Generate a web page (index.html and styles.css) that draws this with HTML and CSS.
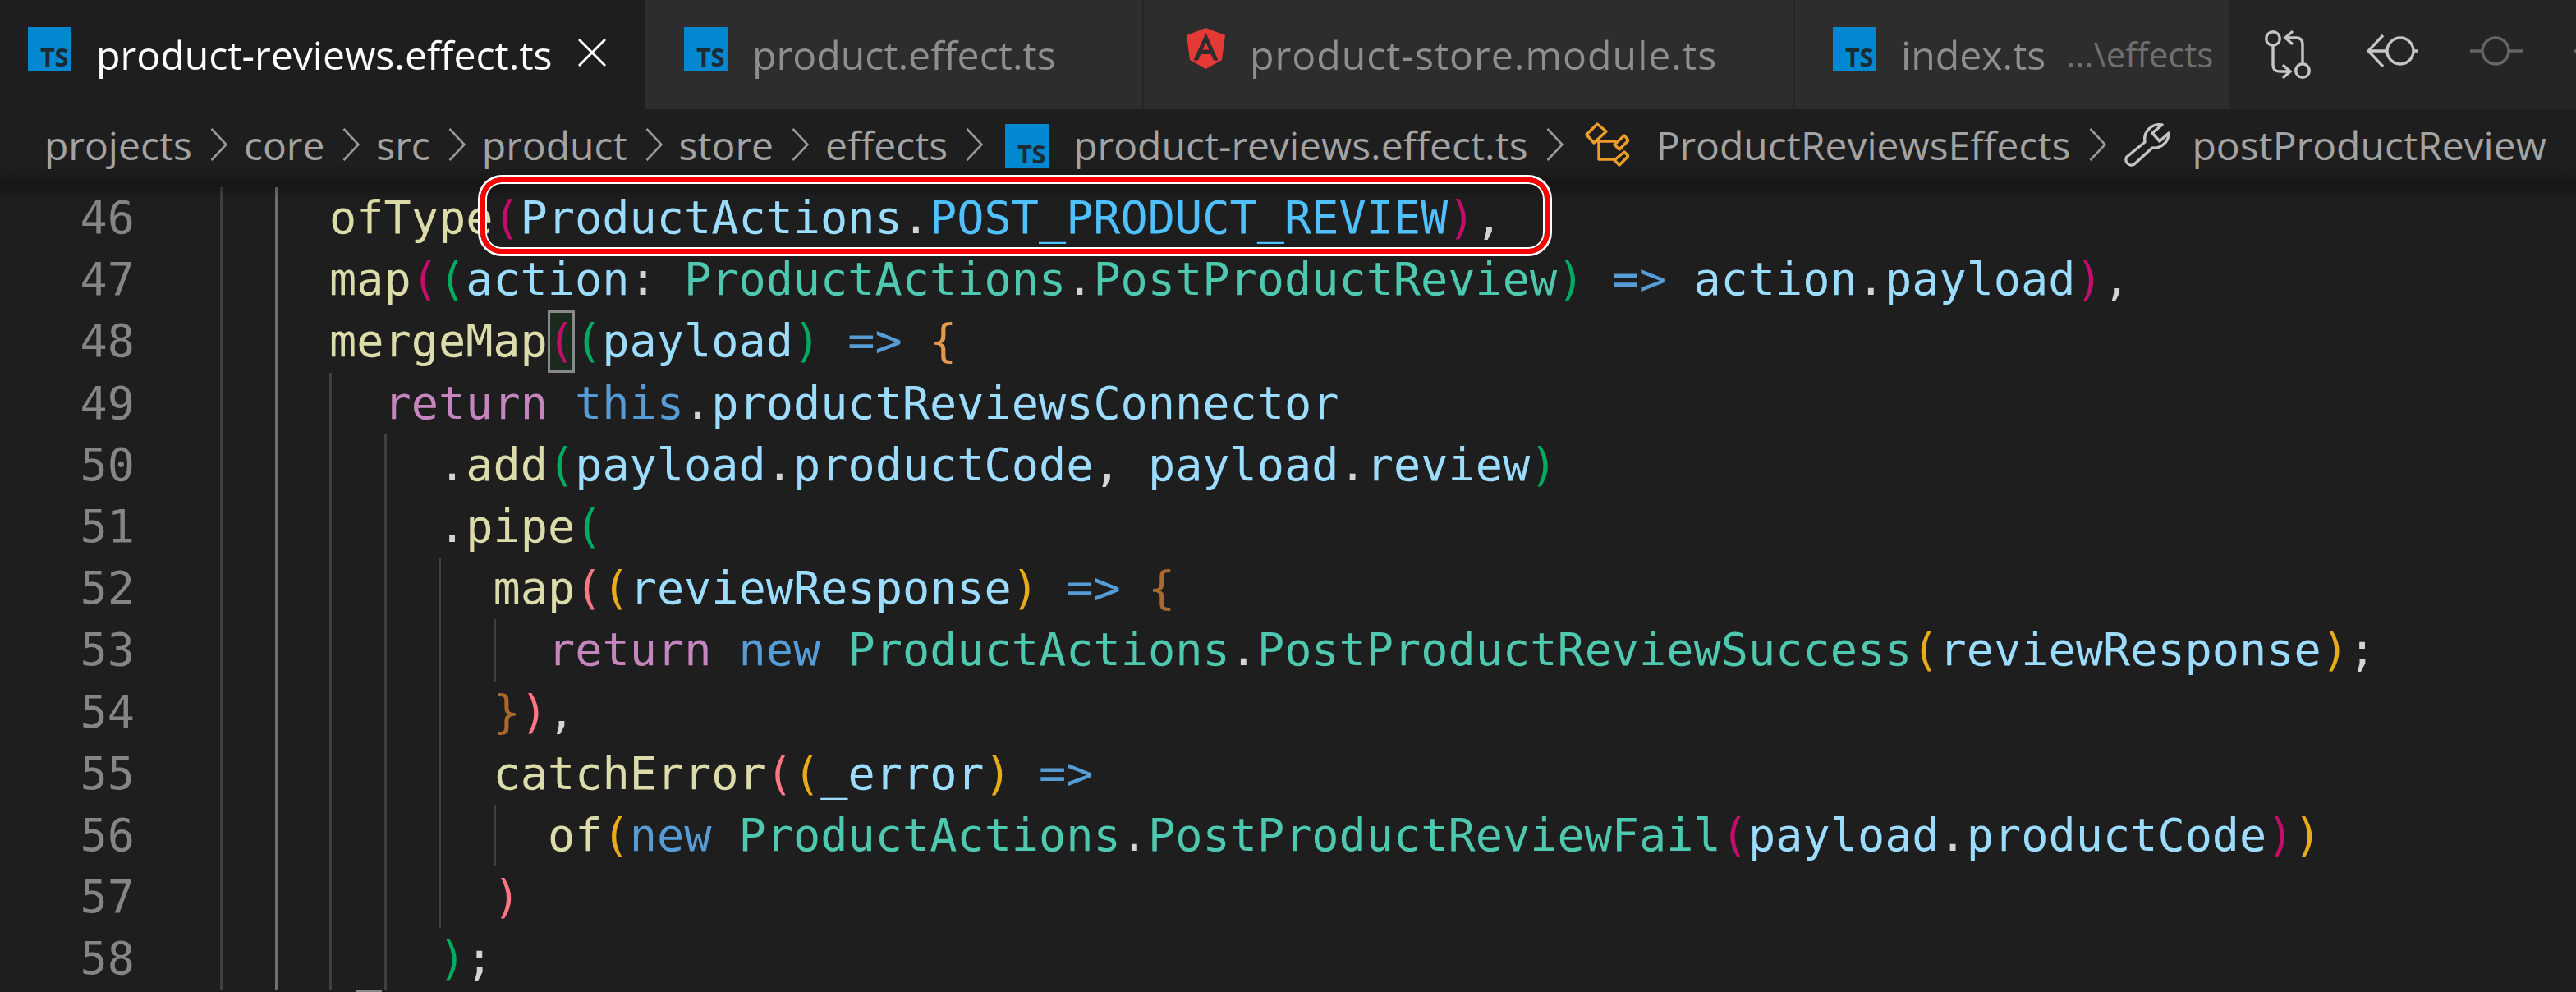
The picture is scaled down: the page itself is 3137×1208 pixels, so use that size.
FILE: index.html
```html
<!DOCTYPE html>
<html lang="en">
<head>
<meta charset="utf-8">
<title>product-reviews.effect.ts</title>
<link rel="stylesheet" href="styles.css">
</head>
<body>
<div class="window">
  <div class="tabbar">
    <div class="tab tab-active tab-1">
      <svg class="ts" viewBox="0 0 53 53"><rect width="53" height="53" fill="#0288d1"/><text x="49" y="48" text-anchor="end" class="ts-text">TS</text></svg>
      <span class="tab-name active-name">product-reviews.effect.ts</span>
      <svg class="close" viewBox="0 0 34 34"><path d="M1 1 33 33M33 1 1 33" stroke="#fff" stroke-width="3" fill="none"/></svg>
    </div>
    <div class="tab tab-2">
      <svg class="ts" viewBox="0 0 53 53"><rect width="53" height="53" fill="#0288d1"/><text x="49" y="48" text-anchor="end" class="ts-text">TS</text></svg>
      <span class="tab-name">product.effect.ts</span>
    </div>
    <div class="tab tab-3">
      <svg class="ng" viewBox="0 0 47 50"><path d="M23.500 0 47 9 43 39 23.500 50 4 39 0 9Z" fill="#e53935"/><path d="M23.500 6 8.500 39.500H14L17.500 32H29.500L33 39.500H38.500ZM19.700 26.500 23.500 17.500 27.300 26.500Z" fill="#2d2d2d" fill-rule="evenodd"/></svg>
      <span class="tab-name">product-store.module.ts</span>
    </div>
    <div class="tab tab-4">
      <svg class="ts" viewBox="0 0 53 53"><rect width="53" height="53" fill="#0288d1"/><text x="49" y="48" text-anchor="end" class="ts-text">TS</text></svg>
      <span class="tab-name">index.ts</span>
      <span class="tab-path">...\effects</span>
    </div>
    <div class="actions">
      <svg class="act act-pr" viewBox="0 0 56 59"><g fill="none" stroke="#c5c5c5" stroke-width="3.400" stroke-linecap="round"><circle cx="10" cy="10" r="8.300"/><circle cx="46" cy="49" r="8.300"/><path d="M10 19V42Q10 50 18 50H30M23 43 31 50 23 57"/><path d="M46 40V17Q46 9 38 9H26M33 2 25 9 33 16"/></g></svg>
      <svg class="act act-prev" viewBox="0 0 63 40"><g fill="none" stroke="#c5c5c5" stroke-width="3.400"><circle cx="41" cy="20" r="16"/><path d="M25 20H2M20 1 2 20 20 39M57 20H63"/></g></svg>
      <svg class="act act-next" viewBox="0 0 64 40"><g fill="none" stroke="#666" stroke-width="3.400"><circle cx="31" cy="20" r="16"/><path d="M0 20H15M47 20H64"/></g></svg>
      <svg class="act act-more" viewBox="0 0 2 40"><path d="M0 20H2" stroke="#666" stroke-width="3.400"/></svg>
    </div>
  </div>
  <div class="crumbs">
    <span>projects</span><svg class="chev" viewBox="0 0 21 40"><path d="M1.500 1 19.500 20 1.500 39" fill="none" stroke="#999" stroke-width="2.600"/></svg>
    <span>core</span><svg class="chev" viewBox="0 0 21 40"><path d="M1.500 1 19.500 20 1.500 39" fill="none" stroke="#999" stroke-width="2.600"/></svg>
    <span>src</span><svg class="chev" viewBox="0 0 21 40"><path d="M1.500 1 19.500 20 1.500 39" fill="none" stroke="#999" stroke-width="2.600"/></svg>
    <span>product</span><svg class="chev" viewBox="0 0 21 40"><path d="M1.500 1 19.500 20 1.500 39" fill="none" stroke="#999" stroke-width="2.600"/></svg>
    <span>store</span><svg class="chev" viewBox="0 0 21 40"><path d="M1.500 1 19.500 20 1.500 39" fill="none" stroke="#999" stroke-width="2.600"/></svg>
    <span>effects</span><svg class="chev" viewBox="0 0 21 40"><path d="M1.500 1 19.500 20 1.500 39" fill="none" stroke="#999" stroke-width="2.600"/></svg>
    <svg class="ts crumb-ts" viewBox="0 0 53 53"><rect width="53" height="53" fill="#0288d1"/><text x="49" y="48" text-anchor="end" class="ts-text">TS</text></svg>
    <span>product-reviews.effect.ts</span><svg class="chev" viewBox="0 0 21 40"><path d="M1.500 1 19.500 20 1.500 39" fill="none" stroke="#999" stroke-width="2.600"/></svg>
    <svg class="sym sym-class" viewBox="0 0 54 54"><g fill="none" stroke="#ee9d28" stroke-width="3.400" stroke-linejoin="round"><path d="M2 15 15 2 26 11 11 25Z"/><path d="M36 27 48 16 53 22 42 33Z"/><path d="M36 46 48 36 53 41 42 52Z"/><path d="M14 23H38M17 23V45H37"/></g></svg>
    <span>ProductReviewsEffects</span><svg class="chev" viewBox="0 0 21 40"><path d="M1.500 1 19.500 20 1.500 39" fill="none" stroke="#999" stroke-width="2.600"/></svg>
    <svg class="sym wrench" viewBox="0 0 57 54"><path d="M46 3 34 13 43 23 54 13A18 18 0 0 1 34 31L12 51A6.500 6.500 0 0 1 3 42L25 24A18 18 0 0 1 46 3Z" fill="none" stroke="#c5c5c5" stroke-width="3.400" stroke-linejoin="round"/></svg>
    <span>postProductReview</span>
  </div>
  <div class="shadow"></div>
  <div class="editor">
    <div class="gutter">
      <div>46</div><div>47</div><div>48</div><div>49</div><div>50</div><div>51</div><div>52</div><div>53</div><div>54</div><div>55</div><div>56</div><div>57</div><div>58</div>
    </div>
    <div class="code">
      <div class="line"><i></i><i></i><span class="fn">ofType</span><span class="p1">(</span><span class="var">ProductActions</span><span class="op">.</span><span class="cst">POST_PRODUCT_REVIEW</span><span class="p1">)</span><span class="op">,</span></div>
      <div class="line"><i></i><i></i><span class="fn">map</span><span class="p1">(</span><span class="p2">(</span><span class="var">action</span><span class="op">: </span><span class="ty">ProductActions</span><span class="op">.</span><span class="ty">PostProductReview</span><span class="p2">)</span><span class="op"> </span><span class="kw">=&gt;</span><span class="op"> </span><span class="var">action</span><span class="op">.</span><span class="var">payload</span><span class="p1">)</span><span class="op">,</span></div>
      <div class="line"><i></i><i></i><span class="fn">mergeMap</span><span class="p1 match">(</span><span class="p2">(</span><span class="var">payload</span><span class="p2">)</span><span class="op"> </span><span class="kw">=&gt;</span><span class="op"> </span><span class="br">{</span></div>
      <div class="line"><i></i><i></i><i></i><span class="ctl">return</span><span class="op"> </span><span class="kw">this</span><span class="op">.</span><span class="var">productReviewsConnector</span></div>
      <div class="line"><i></i><i></i><i></i><i></i><span class="op">.</span><span class="fn">add</span><span class="p2">(</span><span class="var">payload</span><span class="op">.</span><span class="var">productCode</span><span class="op">, </span><span class="var">payload</span><span class="op">.</span><span class="var">review</span><span class="p2">)</span></div>
      <div class="line"><i></i><i></i><i></i><i></i><span class="op">.</span><span class="fn">pipe</span><span class="p2">(</span></div>
      <div class="line"><i></i><i></i><i></i><i></i><i></i><span class="fn">map</span><span class="p3">(</span><span class="p4">(</span><span class="var">reviewResponse</span><span class="p4">)</span><span class="op"> </span><span class="kw">=&gt;</span><span class="op"> </span><span class="br2">{</span></div>
      <div class="line"><i></i><i></i><i></i><i></i><i></i><i></i><span class="ctl">return</span><span class="op"> </span><span class="kw">new</span><span class="op"> </span><span class="ty">ProductActions</span><span class="op">.</span><span class="ty">PostProductReviewSuccess</span><span class="p4">(</span><span class="var">reviewResponse</span><span class="p4">)</span><span class="op">;</span></div>
      <div class="line"><i></i><i></i><i></i><i></i><i></i><span class="br2">}</span><span class="p3">)</span><span class="op">,</span></div>
      <div class="line"><i></i><i></i><i></i><i></i><i></i><span class="fn">catchError</span><span class="p3">(</span><span class="p4">(</span><span class="var">_error</span><span class="p4">)</span><span class="op"> </span><span class="kw">=&gt;</span></div>
      <div class="line"><i></i><i></i><i></i><i></i><i></i><i></i><span class="fn">of</span><span class="p4">(</span><span class="kw">new</span><span class="op"> </span><span class="ty">ProductActions</span><span class="op">.</span><span class="ty">PostProductReviewFail</span><span class="p1">(</span><span class="var">payload</span><span class="op">.</span><span class="var">productCode</span><span class="p1">)</span><span class="p4">)</span></div>
      <div class="line"><i></i><i></i><i></i><i></i><i></i><span class="p3">)</span></div>
      <div class="line"><i></i><i></i><i></i><i></i><span class="p2">)</span><span class="op">;</span></div>
    </div>
  </div>
  <div class="callout"></div>
  <div class="fold-mark"></div>
</div>
</body>
</html>
```
FILE: styles.css
```css
* { box-sizing: border-box; }
html, body { margin: 0; padding: 0; background: #1e1e1e; }
.window { position: relative; width: 3137px; height: 1208px; overflow: hidden; background: #1e1e1e; font-family: "Open Sans", sans-serif; }

.tabbar { display: flex; height: 133px; background: #252526; }
.tab { display: flex; align-items: flex-start; flex: none; height: 133px; padding-top: 33px; background: #2d2d2d; border-right: 2px solid #252526; }
.tab-active { background: #1e1e1e; border-right: 0; }
.tab-1 { width: 786px; padding-left: 34px; padding-right: 48px; }
.tab-2 { width: 607px; padding-left: 47px; }
.tab-3 { width: 793px; padding-left: 52px; letter-spacing: 1px; }
.tab-4 { width: 529px; padding-left: 46px; border-right: 0; }
.ts { width: 53px; height: 53px; flex: none; overflow: visible; }
.ts-text { font-family: "Open Sans", sans-serif; font-weight: 700; font-size: 31px; fill: #1c2a33; letter-spacing: -.5px; }
.ng { width: 47px; height: 50px; flex: none; margin-top: 1px; }
.tab-name { font-size: 48.200px; line-height: 66px; color: #8e8e8e; margin-left: 30px; white-space: nowrap; }
.active-name { color: #fff; }
.tab-path { font-size: 42px; line-height: 66px; color: #6f6f6f; margin-left: 25px; white-space: nowrap; }
.close { width: 34px; height: 34px; margin: 14px 0 0 auto; flex: none; }

.actions { flex: 1; display: flex; align-items: flex-start; padding: 37px 0 0 43px; }
.act { flex: none; }
.act-pr { width: 56px; height: 59px; }
.act-prev { width: 63px; height: 40px; margin: 5px 0 0 68px; }
.act-next { width: 64px; height: 40px; margin: 5px 0 0 63px; }
.act-more { width: 2px; height: 40px; margin: 5px 0 0 63px; }

.crumbs { height: 88px; display: flex; align-items: center; padding: 0 0 2px 54px; color: #a3a3a3; font-size: 48px; white-space: nowrap; background: #1e1e1e; }
.chev { width: 21px; height: 40px; margin: 0 20px 0 22px; flex: none; }
.crumb-ts { margin: 3px 30px 0 7px; }
.sym { width: 54px; height: 54px; margin: 0 33px 0 2px; flex: none; }
.sym-class { margin-left: 6px; }
.wrench { width: 57px; margin-right: 26px; }

.shadow { height: 0; position: relative; z-index: 1; box-shadow: 0 4px 16px 6px rgba(0,0,0,.4); }

.editor { display: flex; height: 987px; font-family: "DejaVu Sans Mono", monospace; font-size: 55.200px; line-height: 75.200px; }
.gutter { width: 268px; flex: none; padding: 7px 104px 0 0; color: #858585; text-align: right; }
.code { flex: 1; padding-top: 7px; }
.line { display: flex; height: 75.200px; white-space: pre; }
.line i { flex: none; width: 66.500px; height: 75.200px; border-left: 3px solid #404040; }
.line i:nth-child(2) { border-left-color: #707070; }
.line span { flex: none; }

.fn { color: #dcdcaa; }
.var { color: #9cdcfe; }
.cst { color: #4fc1ff; }
.ty { color: #4ec9b0; }
.kw { color: #569cd6; }
.ctl { color: #c586c0; }
.op { color: #d4d4d4; }
.p1 { color: #c40d6a; }
.p2 { color: #00ad5f; }
.p3 { color: #ff7583; }
.p4 { color: #e8ac1b; }
.br { color: #e39a4c; }
.br2 { color: #a9682e; }
.match { background: #1b2a1e; outline: 3px solid #888; outline-offset: -3px; }

.callout { position: absolute; left: 585px; top: 216px; width: 1302px; height: 93px; z-index: 2; border: 6px solid #f00; border-radius: 26px; box-shadow: 0 0 0 3px #fff, inset 0 0 0 2px #fff; }
.fold-mark { position: absolute; left: 434px; top: 1206px; width: 31px; height: 2px; background: #888; }
```
